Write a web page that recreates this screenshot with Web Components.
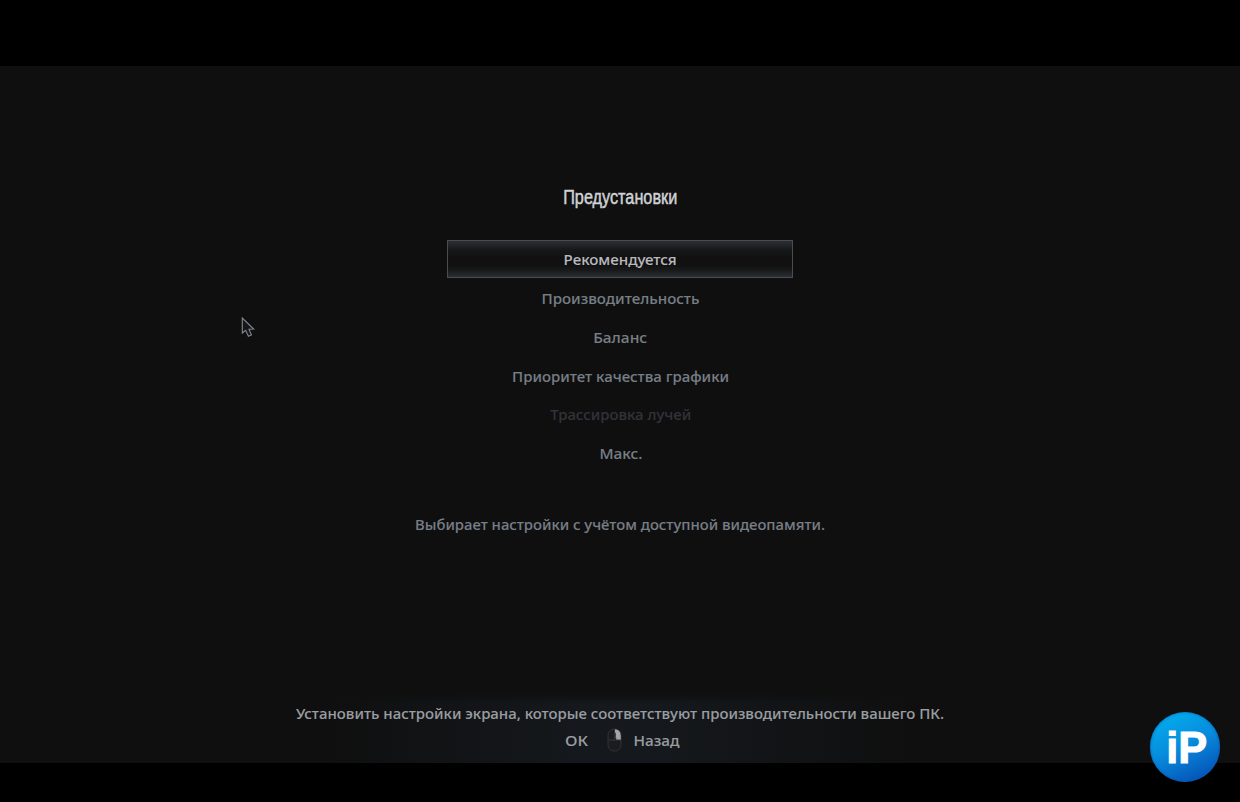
<!DOCTYPE html>
<html lang="ru">
<head>
<meta charset="utf-8">
<title>Предустановки</title>
<style>
    body {
        margin: 0;
        background: #000;
        overflow: hidden;
    }
</style>
</head>
<body>
<preset-screen>
    <fit-label slot="title" class="title" width="114">Предустановки</fit-label>
    <preset-item selected width="113">Рекомендуется</preset-item>
    <preset-item width="158">Производительность</preset-item>
    <preset-item width="54">Баланс</preset-item>
    <preset-item width="217">Приоритет качества графики</preset-item>
    <preset-item disabled width="141">Трассировка лучей</preset-item>
    <preset-item width="43">Макс.</preset-item>
    <fit-label slot="description" width="410">Выбирает настройки с учётом доступной видеопамяти.</fit-label>
    <help-bar slot="help">
        <fit-label width="648">Установить настройки экрана, которые соответствуют производительности вашего ПК.</fit-label>
        <fit-label slot="ok" width="23">ОК</fit-label>
        <fit-label slot="back" width="46">Назад</fit-label>
    </help-bar>
</preset-screen>
<mouse-pointer></mouse-pointer>
<channel-logo>iP</channel-logo>

<script>
const attach = (el, html) => {
    el.attachShadow({ mode: 'open' }).innerHTML = html;
};

// one line of text, horizontally scaled to the width it is given
class FitLabel extends HTMLElement {
    constructor() {
        super();
        attach(this, `
            <style>
                :host {
                    display: flex;
                    justify-content: center;
                    white-space: nowrap;
                }
                span {
                    display: block;
                    flex: none;
                }
            </style>
            <span><slot></slot></span>
        `);
    }

    connectedCallback() {
        const width = Number(this.getAttribute('width'));
        const span = this.shadowRoot.querySelector('span');
        this.style.width = `${width}px`;
        const natural = span.getBoundingClientRect().width;
        span.style.transform = `scaleX(${width / natural})`;
    }
}

class PresetItem extends HTMLElement {
    constructor() {
        super();
        attach(this, `
            <style>
                :host {
                    display: flex;
                    align-items: center;
                    justify-content: center;
                    box-sizing: border-box;
                    width: 346px;
                    height: 38.75px;
                    padding: 1px 0 0 1px;
                    border: 1px solid transparent;
                    color: #777e86;
                }
                :host([selected]) {
                    color: #b9b9be;
                    border-color: #494c50;
                    background: linear-gradient(#2c2e33, #17181a 25%, #111 45%, #111 68%, #181a1c 82%, #2b2e32);
                }
                :host([disabled]) {
                    color: #323339;
                }
            </style>
            <fit-label width="${this.getAttribute('width')}"><slot></slot></fit-label>
        `);
    }
}

class HelpBar extends HTMLElement {
    constructor() {
        super();
        attach(this, `
            <style>
                :host {
                    display: flex;
                    flex-direction: column;
                    align-items: center;
                    box-sizing: border-box;
                    width: 100%;
                    height: 69px;
                    padding-top: 6px;
                    color: #9a9da0;
                    background:
                        linear-gradient(#0f0f0f, transparent 10px),
                        linear-gradient(90deg, transparent 330px, #111315 430px, #15181c 580px, #15181c 660px, #111315 800px, transparent 910px);
                }
                .keys {
                    display: flex;
                    align-items: center;
                    height: 27px;
                    padding-left: 4px;
                }
                svg {
                    margin: 0 11px 0 19px;
                }
            </style>
            <slot></slot>
            <div class="keys">
                <slot name="ok"></slot>
                <svg width="15" height="24" viewBox="0 0 15 24">
                    <rect x="1" y="1" width="13" height="22" rx="6.2" fill="#1b1c20" stroke="#303238"/>
                    <path d="M7.5 1.2Q13.8 1.2 13.8 8V12H9.2V9.5H7.5Z" fill="#a1a4a8"/>
                    <path d="M1.5 12H13.5M7.5 1V5M7.5 9V12" stroke="#33353a"/>
                    <rect x="6.4" y="4.5" width="2.4" height="5" rx="1.2" fill="#25272c"/>
                </svg>
                <slot name="back"></slot>
            </div>
        `);
    }
}

class PresetScreen extends HTMLElement {
    constructor() {
        super();
        attach(this, `
            <style>
                :host {
                    display: flex;
                    flex-direction: column;
                    align-items: center;
                    box-sizing: border-box;
                    width: 1240px;
                    height: 802px;
                    border-top: 66px solid #000;
                    border-bottom: 39px solid #000;
                    background: #0f0f0f;
                    color: #777e86;
                    font: 500 15px/26px "Noto Sans", sans-serif;
                    -webkit-text-stroke: 0.1px;
                }
                ::slotted([slot="title"]) {
                    margin-top: 117px;
                    color: #d0d2d5;
                    font: 20px/28px "Liberation Sans Narrow", "Liberation Sans", sans-serif;
                    -webkit-text-stroke: 0.5px;
                }
                .items {
                    margin-top: 28.5px;
                }
                ::slotted([slot="description"]) {
                    margin-top: 39px;
                }
                ::slotted([slot="help"]) {
                    margin-top: auto;
                }
            </style>
            <slot name="title"></slot>
            <div class="items"><slot></slot></div>
            <slot name="description"></slot>
            <slot name="help"></slot>
        `);
    }
}

class MousePointer extends HTMLElement {
    constructor() {
        super();
        attach(this, `
            <style>
                :host {
                    position: absolute;
                    left: 241px;
                    top: 316px;
                }
                svg {
                    display: block;
                }
            </style>
            <svg width="15" height="22" viewBox="0 0 15 22">
                <path d="M1.3 2V17L4.7 14.3L7.4 20.2L10.4 18.9L8 13.2L12.7 13Z" fill="#15171b" stroke="#83878b" stroke-width="1.1"/>
            </svg>
        `);
    }
}

class ChannelLogo extends HTMLElement {
    constructor() {
        super();
        attach(this, `
            <style>
                :host {
                    position: absolute;
                    left: 1150px;
                    top: 712px;
                    display: flex;
                    align-items: center;
                    justify-content: center;
                    box-sizing: border-box;
                    width: 70px;
                    height: 70px;
                    padding: 1px 0 0 3px;
                    border-radius: 50%;
                    background: linear-gradient(155deg, #04aaec 12%, #078bdc 48%, #0550b4 92%);
                    box-shadow: inset 0 0 3px #0759ae;
                    color: #fff;
                    font: bold 44px/68px "Liberation Sans", Arial, sans-serif;
                    -webkit-text-stroke: 1px;
                }
            </style>
            <fit-label width="41"><slot></slot></fit-label>
        `);
    }
}

customElements.define('preset-screen', PresetScreen);
customElements.define('preset-item', PresetItem);
customElements.define('help-bar', HelpBar);
customElements.define('mouse-pointer', MousePointer);
customElements.define('channel-logo', ChannelLogo);
// last, so that labels measure themselves in the fonts of their hosts
customElements.define('fit-label', FitLabel);
</script>
</body>
</html>
